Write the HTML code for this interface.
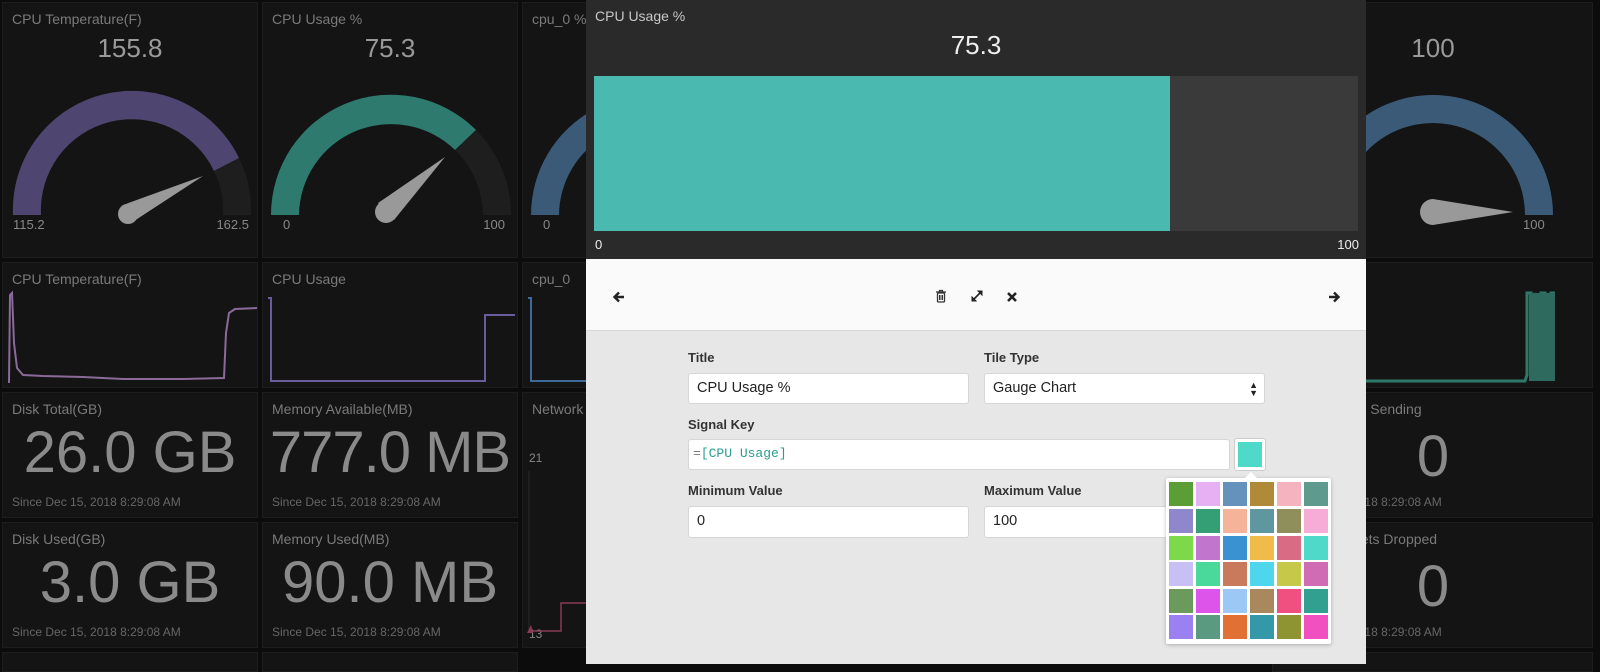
<!DOCTYPE html>
<html><head><meta charset="utf-8"><style>
*{box-sizing:border-box;margin:0;padding:0}
body{width:1600px;height:664px;overflow:hidden;background:#0c0c0c;font-family:"Liberation Sans",sans-serif;position:relative}
.t{position:absolute;background:#141414;border:1px solid #1d1d1d}
.tt{position:absolute;left:9px;top:8px;color:#7a7a7a;font-size:14px;white-space:nowrap}
.big{position:absolute;left:0;right:0;text-align:center;color:#8a8a8a;font-size:58px}
.since{position:absolute;left:9px;bottom:8px;color:#666;font-size:12px;white-space:nowrap}
.gv{position:absolute;left:0;right:0;top:30px;text-align:center;color:#9a9a9a;font-size:26px}
.ab{position:absolute;color:#888;font-size:13px}
#modal{position:absolute;left:586px;top:0;width:780px;height:664px;background:#e7e7e7}
#mtop{position:absolute;left:0;top:0;width:780px;height:259px;background:#2a2a2a}
#mhead{position:absolute;left:0;top:259px;width:780px;height:72px;background:#fafafa;border-bottom:1px solid #d8d8d8}
.lbl{position:absolute;font-size:13px;color:#333;font-weight:bold}
.inp{position:absolute;background:#fff;border:1px solid #d6d6d6;border-radius:3px;font-size:14.5px;color:#222;padding-left:8px;line-height:28px}
#pal{position:absolute;left:1166px;top:478px;width:165px;height:166px;background:#fff;box-shadow:0 1px 4px rgba(0,0,0,.25);border-radius:2px}
#pal div{position:absolute;width:24px;height:24px}
</style></head><body>

<div class="t" style="left:2px;top:2px;width:256px;height:256px">
 <div class="tt">CPU Temperature(F)</div><div class="gv">155.8</div>
 <svg style="position:absolute;left:0;top:0" width="256" height="256">
  <path d="M10 212 A119 119 0 0 1 236 155 L211 168 A91 91 0 0 0 38 212Z" fill="#4e4670"/>
  <path d="M236 155 A119 119 0 0 1 248 212 L220 212 A91 91 0 0 0 211 168Z" fill="#1e1e1e"/>
  <path d="M120 202 L200 173 L128 220 A10 10 0 0 1 120 202Z" fill="#999"/><circle cx="125" cy="211" r="10" fill="#999"/>
 </svg>
 <div class="ab" style="left:10px;top:214px">115.2</div><div class="ab" style="right:8px;top:214px">162.5</div>
</div>
<div class="t" style="left:262px;top:2px;width:256px;height:256px">
 <div class="tt">CPU Usage %</div><div class="gv">75.3</div>
 <svg style="position:absolute;left:0;top:0" width="256" height="256">
  <path d="M8 212 A120 120 0 0 1 213 127 L192 147 A92 92 0 0 0 36 212Z" fill="#2e7a6f"/>
  <path d="M213 127 A120 120 0 0 1 248 212 L220 212 A92 92 0 0 0 192 147Z" fill="#1e1e1e"/>
  <path d="M115 200 L182 154 L131 217Z" fill="#999"/><circle cx="123" cy="209" r="11" fill="#999"/>
 </svg>
 <div class="ab" style="left:20px;top:214px">0</div><div class="ab" style="right:12px;top:214px">100</div>
</div>
<div class="t" style="left:522px;top:2px;width:256px;height:256px">
 <div class="tt">cpu_0 %</div>
 <svg style="position:absolute;left:0;top:0" width="256" height="256"><path d="M8 212 A120 120 0 0 1 70 107 L84 132 A92 92 0 0 0 36 212Z" fill="#3a5a78"/></svg>
 <div class="ab" style="left:20px;top:214px">0</div>
</div>
<div class="t" style="left:1272px;top:2px;width:321px;height:256px">
 <div class="gv" style="left:0;right:auto;width:320px">100</div>
 <svg style="position:absolute;left:0;top:0" width="320" height="256"><path d="M40 212 A120 120 0 0 1 280 212 L252 212 A92 92 0 0 0 68 212Z" fill="#3a5a78"/>
 <path d="M160 196 L240 209 L160 222 A13 13 0 0 1 160 196Z" fill="#999"/></svg>
 <div class="ab" style="left:250px;top:214px">100</div>
</div>

<div class="t" style="left:2px;top:262px;width:256px;height:126px">
 <div class="tt">CPU Temperature(F)</div>
 <svg style="position:absolute;left:0;top:0" width="256" height="126"><path d="M6 120 L7 32 L9 30 L11 80 L14 105 L20 112 L40 113 L80 114 L120 116 L180 116 L221 115 L223 70 L226 50 L232 46 L254 45" stroke="#8b6a9a" stroke-width="2" fill="none"/></svg>
</div>
<div class="t" style="left:262px;top:262px;width:256px;height:126px">
 <div class="tt">CPU Usage</div>
 <svg style="position:absolute;left:0;top:0" width="256" height="126"><path d="M5 35 L8 35 L8 118 L222 118 L222 52 L252 52" stroke="#6a5a9e" stroke-width="2" fill="none"/></svg>
</div>
<div class="t" style="left:522px;top:262px;width:256px;height:126px">
 <div class="tt">cpu_0</div>
 <svg style="position:absolute;left:0;top:0" width="256" height="126"><path d="M5 35 L8 35 L8 118 L70 118" stroke="#3e6a9a" stroke-width="2" fill="none"/></svg>
</div>
<div class="t" style="left:1272px;top:262px;width:321px;height:126px">
 <svg style="position:absolute;left:0;top:0" width="320" height="126"><path d="M0 118 L252 118 L254 112 L254 30 L258 30 L258 118 L262 30 L266 110 L268 30 L272 30 L272 118 L276 40 L278 30 L282 30" stroke="#2e7a6a" stroke-width="3" fill="none"/><rect x="256" y="30" width="26" height="88" fill="#2e6a5e"/></svg>
</div>

<div class="t" style="left:2px;top:392px;width:256px;height:126px"><div class="tt">Disk Total(GB)</div><div class="big" style="top:26px">26.0 GB</div><div class="since">Since Dec 15, 2018 8:29:08 AM</div></div>
<div class="t" style="left:262px;top:392px;width:256px;height:126px"><div class="tt">Memory Available(MB)</div><div class="big" style="top:26px;letter-spacing:-1px">777.0 MB</div><div class="since">Since Dec 15, 2018 8:29:08 AM</div></div>
<div class="t" style="left:2px;top:522px;width:256px;height:126px"><div class="tt">Disk Used(GB)</div><div class="big" style="top:26px">3.0 GB</div><div class="since">Since Dec 15, 2018 8:29:08 AM</div></div>
<div class="t" style="left:262px;top:522px;width:256px;height:126px"><div class="tt">Memory Used(MB)</div><div class="big" style="top:26px">90.0 MB</div><div class="since">Since Dec 15, 2018 8:29:08 AM</div></div>
<div class="t" style="left:522px;top:392px;width:256px;height:256px">
 <div class="tt">Network</div>
 <div class="ab" style="left:6px;top:58px;font-size:12px">21</div><div class="ab" style="left:6px;top:234px;font-size:12px">13</div>
 <svg style="position:absolute;left:0;top:0" width="256" height="256"><path d="M6 78 L6 238" stroke="#2a2a2a"/><path d="M4 240 L8 232 L10 240Z" fill="#8a3a55"/><path d="M8 238 L38 238 L38 210 L80 210" stroke="#8a3a55" stroke-width="1.5" fill="none"/></svg>
</div>
<div class="t" style="left:1272px;top:392px;width:321px;height:126px"><div class="tt" style="left:0">Network Errors Sending</div><div class="big" style="top:30px;left:0;right:auto;width:320px">0</div><div class="since" style="left:0">Since Dec 15, 2018 8:29:08 AM</div></div>
<div class="t" style="left:1272px;top:522px;width:321px;height:126px"><div class="tt" style="left:-4px">Incoming Packets Dropped</div><div class="big" style="top:30px;left:0;right:auto;width:320px">0</div><div class="since" style="left:0">Since Dec 15, 2018 8:29:08 AM</div></div>
<div class="t" style="left:2px;top:652px;width:256px;height:20px"></div>
<div class="t" style="left:262px;top:652px;width:256px;height:20px"></div>
<div class="t" style="left:1272px;top:652px;width:321px;height:20px"></div>

<div id="modal">
 <div id="mtop">
  <div style="position:absolute;left:9px;top:8px;color:#c8c8c8;font-size:14px">CPU Usage %</div>
  <div style="position:absolute;left:0;right:0;top:30px;text-align:center;color:#eee;font-size:26px">75.3</div>
  <div style="position:absolute;left:8px;top:76px;width:764px;height:155px;background:#3a3a3a"></div>
  <div style="position:absolute;left:8px;top:76px;width:576px;height:155px;background:#4ab9b0"></div>
  <div style="position:absolute;left:9px;top:237px;color:#eee;font-size:13px">0</div>
  <div style="position:absolute;right:7px;top:237px;color:#eee;font-size:13px">100</div>
 </div>
 <div id="mhead">
  <svg style="position:absolute;left:26px;top:31px" width="14" height="14"><path d="M12 7H3M7 2.5L2.5 7L7 11.5" stroke="#222" stroke-width="2.4" fill="none"/></svg>
  <svg style="position:absolute;left:349px;top:30px" width="12" height="14"><path d="M1 3H11M4.5 3V1.5H7.5V3" stroke="#333" stroke-width="1.2" fill="none"/><rect x="2.5" y="4" width="7" height="9" rx="1" fill="none" stroke="#333" stroke-width="1.3"/><path d="M4.5 6V11M6 6V11M7.5 6V11" stroke="#333"/></svg>
  <svg style="position:absolute;left:384px;top:30px" width="14" height="14"><path d="M3 11L11 3" stroke="#222" stroke-width="1.6"/><path d="M8 2H12V6Z M2 8V12H6Z" fill="#222" stroke="#222"/></svg>
  <svg style="position:absolute;left:420px;top:32px" width="12" height="12"><path d="M2 2L10 10M10 2L2 10" stroke="#222" stroke-width="2.6"/></svg>
  <svg style="position:absolute;left:741px;top:31px" width="14" height="14"><path d="M2 7H11M7 2.5L11.5 7L7 11.5" stroke="#222" stroke-width="2.4" fill="none"/></svg>
 </div>
 <div class="lbl" style="left:102px;top:350px">Title</div>
 <div class="lbl" style="left:398px;top:350px">Tile Type</div>
 <div class="inp" style="left:102px;top:373px;width:281px;height:31px">CPU Usage %</div>
 <div class="inp" style="left:398px;top:373px;width:281px;height:31px">Gauge Chart<span style="position:absolute;right:6px;font-size:9px;line-height:8px;top:7px">▲<br>▼</span></div>
 <div class="lbl" style="left:102px;top:417px">Signal Key</div>
 <div class="inp" style="left:102px;top:439px;width:542px;height:31px;font-family:'Liberation Mono',monospace;font-size:13px;color:#2a9d91;padding-left:4px"><span style="color:#777">=</span>[CPU Usage]</div>
 <div style="position:absolute;left:648px;top:438px;width:32px;height:33px;background:#fff;border:1px solid #ccc;border-radius:3px"><div style="position:absolute;left:3px;top:3px;width:24px;height:25px;background:#4fd9c8"></div></div>
 <div class="lbl" style="left:102px;top:483px">Minimum Value</div>
 <div class="lbl" style="left:398px;top:483px">Maximum Value</div>
 <div class="inp" style="left:102px;top:506px;width:281px;height:32px">0</div>
 <div class="inp" style="left:398px;top:506px;width:281px;height:32px">100</div>
</div>

<div id="pal">
<div style="left:3px;top:4px;background:#5a9e35"></div><div style="left:30px;top:4px;background:#e6b0f2"></div><div style="left:57px;top:4px;background:#6591bd"></div><div style="left:84px;top:4px;background:#b08a38"></div><div style="left:111px;top:4px;background:#f5b3c0"></div><div style="left:138px;top:4px;background:#5f9a8f"></div>
<div style="left:3px;top:31px;background:#8f87cc"></div><div style="left:30px;top:31px;background:#349e74"></div><div style="left:57px;top:31px;background:#f5b39a"></div><div style="left:84px;top:31px;background:#5f97a0"></div><div style="left:111px;top:31px;background:#8e8f5a"></div><div style="left:138px;top:31px;background:#f7acd8"></div>
<div style="left:3px;top:58px;background:#7dd94a"></div><div style="left:30px;top:58px;background:#c275cc"></div><div style="left:57px;top:58px;background:#3a93d0"></div><div style="left:84px;top:58px;background:#f0bb48"></div><div style="left:111px;top:58px;background:#d96c84"></div><div style="left:138px;top:58px;background:#4fd9c8"></div>
<div style="left:3px;top:84px;background:#c8bff5"></div><div style="left:30px;top:84px;background:#4ad99a"></div><div style="left:57px;top:84px;background:#c97a5c"></div><div style="left:84px;top:84px;background:#4dd6ec"></div><div style="left:111px;top:84px;background:#c6c84a"></div><div style="left:138px;top:84px;background:#d06cb4"></div>
<div style="left:3px;top:111px;background:#6a9a5c"></div><div style="left:30px;top:111px;background:#dc54ea"></div><div style="left:57px;top:111px;background:#9cc8f5"></div><div style="left:84px;top:111px;background:#a8885c"></div><div style="left:111px;top:111px;background:#f0507f"></div><div style="left:138px;top:111px;background:#32a090"></div>
<div style="left:3px;top:137px;background:#9a80f0"></div><div style="left:30px;top:137px;background:#5a9a80"></div><div style="left:57px;top:137px;background:#e07034"></div><div style="left:84px;top:137px;background:#3498a8"></div><div style="left:111px;top:137px;background:#8e9432"></div><div style="left:138px;top:137px;background:#f050c0"></div>
</div>
<div style="position:absolute;left:1244px;top:472px;width:0;height:0;border-left:7px solid transparent;border-right:7px solid transparent;border-bottom:7px solid #fff"></div>
</body></html>
